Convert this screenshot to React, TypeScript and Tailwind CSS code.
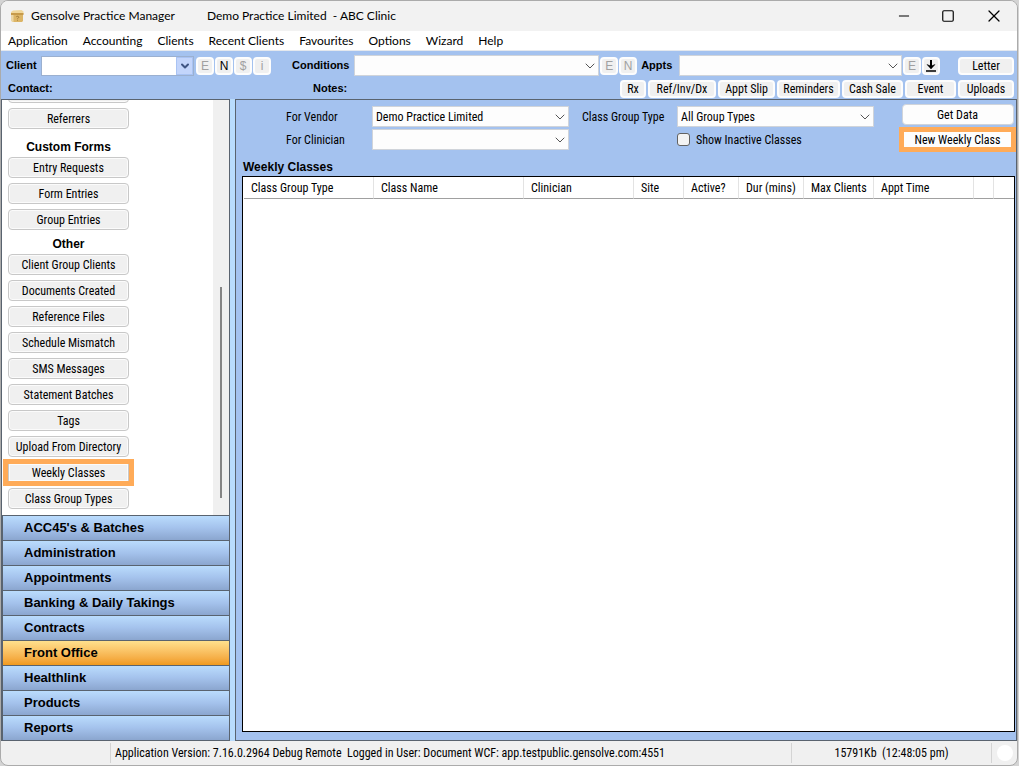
import React from 'react';
import { Minus, Square, X, ChevronDown } from 'lucide-react';

const menuItems = ['Application', 'Accounting', 'Clients', 'Recent Clients', 'Favourites', 'Options', 'Wizard', 'Help'];

const quickActions = [
  { name: 'Rx', width: 'w-[26px]' },
  { name: 'Ref/Inv/Dx', width: 'w-[68px]' },
  { name: 'Appt Slip', width: 'w-[57px]' },
  { name: 'Reminders', width: 'w-[63px]' },
  { name: 'Cash Sale', width: 'w-[61px]' },
  { name: 'Event', width: 'w-[51px]' },
  { name: 'Uploads', width: 'w-[56px]' },
];

const otherLinks = [
  'Client Group Clients',
  'Documents Created',
  'Reference Files',
  'Schedule Mismatch',
  'SMS Messages',
  'Statement Batches',
  'Tags',
  'Upload From Directory',
  'Weekly Classes',
  'Class Group Types',
];

const sections = [
  "ACC45's & Batches",
  'Administration',
  'Appointments',
  'Banking & Daily Takings',
  'Contracts',
  'Front Office',
  'Healthlink',
  'Products',
  'Reports',
];

const columns = [
  { name: 'Class Group Type', width: 'w-[130px]' },
  { name: 'Class Name', width: 'w-[150px]' },
  { name: 'Clinician', width: 'w-[110px]' },
  { name: 'Site', width: 'w-[50px]' },
  { name: 'Active?', width: 'w-[55px]' },
  { name: 'Dur (mins)', width: 'w-[65px]' },
  { name: 'Max Clients', width: 'w-[70px]' },
  { name: 'Appt Time', width: 'w-[100px]' },
  { name: '', width: 'w-[20px]' },
  { name: '', width: '' },
];

type ComboProps = { id: string; options?: string[]; className?: string };

const Combo = ({ id, options = [''], className = '' }: ComboProps) => (
  <div className={`relative h-[21px] ${className}`}>
    <select
      id={id}
      className="block h-full w-full appearance-none border border-[#d0d4da] bg-[#fdfdfd] pl-[3px] pr-5 leading-none outline-none"
    >
      {options.map((option) => (
        <option key={option}>{option}</option>
      ))}
    </select>
    <ChevronDown className="pointer-events-none absolute right-px top-[3px] h-4 w-4 text-[#555]" strokeWidth={1.5} />
  </div>
);

type SmallButtonProps = { children: React.ReactNode; label: string; disabled?: boolean };

const SmallButton = ({ children, label, disabled }: SmallButtonProps) => (
  <button
    aria-label={label}
    disabled={disabled}
    className="flex h-[18px] w-[18px] items-center justify-center rounded border-2 border-[#fdfdfd] bg-[#f0f0f0] text-xs leading-none text-black disabled:text-[#a0a0a0]"
  >
    {children}
  </button>
);

const SideButton = ({ name }: { name: string }) => (
  <button className="h-[21px] w-[121px] shrink-0 rounded border border-[#c8c8c8] bg-[#f0f0f0] leading-none ring-1 ring-inset ring-[#fbfbfb]">
    {name}
  </button>
);

const App = () => {
  return (
    <div className="h-screen bg-[#d4d4d4] pr-px text-xs text-black font-['Roboto_Condensed','Liberation_Sans',sans-serif]">
      <div className="flex h-full flex-col overflow-hidden rounded-lg border border-[#ababab] bg-[#f0f0f0]">
        {/* Title bar */}
        <header className="flex h-[30px] shrink-0 items-center bg-[#f2f2f2] pl-2 font-[Lato,sans-serif]">
          <svg viewBox="0 0 16 16" className="mr-[6px] h-4 w-4">
            <path d="M4 2.5 L12.5 2 L14.5 3.5 V6 H2 V4 Z" fill="#f0d79b" />
            <path d="M2 5 H14.5 V7 H2 Z" fill="#c69a4a" />
            <path d="M2.5 7 H14 V13 L13 14 H3.5 L2.5 13 Z" fill="#dcb566" />
            <path d="M2.5 7 H4.5 V14 H3.5 L2.5 13 Z" fill="#ecd7a6" />
            <path d="M7.3 9 C7.5 8 10 8 9.7 9.5 L8.5 10.7 M8.5 11.8 V12.6" fill="none" stroke="#9c7636" />
          </svg>
          <h1>Gensolve Practice Manager</h1>
          <span className="ml-8 whitespace-pre">Demo Practice Limited  - ABC Clinic</span>
          <div className="ml-auto flex items-center gap-[29px] pr-[13px]">
            <button aria-label="Minimize">
              <Minus className="h-4 w-4" strokeWidth={1.5} />
            </button>
            <button aria-label="Maximize">
              <Square className="h-[14px] w-[14px]" strokeWidth={2} />
            </button>
            <button aria-label="Close">
              <X className="h-5 w-5" strokeWidth={1.5} />
            </button>
          </div>
        </header>

        {/* Menu */}
        <nav className="flex h-[19px] shrink-0 items-center gap-[15px] bg-white pl-[7px] leading-none font-[Lato,sans-serif]">
          {menuItems.map((item) => (
            <button key={item}>{item}</button>
          ))}
        </nav>

        {/* Client toolbar */}
        <div className="shrink-0 border-t border-[#e4e8ee] bg-[#a4c2ef] pt-1">
          <div className="flex h-[21px] items-center pl-[5px] pr-[3px]">
            <label htmlFor="client" className="w-[35px] text-[11px] font-bold font-['Liberation_Sans',Arial,sans-serif]">Client</label>
            <div className="relative h-5 w-[153px]">
              <input id="client" className="block h-full w-full border border-[#9bb0d0] bg-white pl-1 pr-5 outline-none" />
              <button
                aria-label="Choose client"
                className="absolute right-px top-px flex h-[18px] w-[17px] items-center justify-center border border-[#a9c3f3] bg-[#c3d5fb]"
              >
                <ChevronDown className="h-3 w-3 text-[#3f5583]" strokeWidth={4} />
              </button>
            </div>
            <div className="ml-[2px] flex gap-px font-['Liberation_Sans',Arial,sans-serif]">
              <SmallButton label="Edit client" disabled>E</SmallButton>
              <SmallButton label="New client">N</SmallButton>
              <SmallButton label="Client account" disabled>$</SmallButton>
              <SmallButton label="Client info" disabled>i</SmallButton>
            </div>
            <label htmlFor="conditions" className="ml-[21px] w-[62px] text-[11px] font-bold font-['Liberation_Sans',Arial,sans-serif]">Conditions</label>
            <Combo id="conditions" className="flex-[11]" />
            <div className="ml-px flex gap-px font-['Liberation_Sans',Arial,sans-serif]">
              <SmallButton label="Edit condition" disabled>E</SmallButton>
              <SmallButton label="New condition" disabled>N</SmallButton>
            </div>
            <label htmlFor="appts" className="ml-1 w-[38px] text-[11px] font-bold font-['Liberation_Sans',Arial,sans-serif]">Appts</label>
            <Combo id="appts" className="flex-[10]" />
            <div className="ml-px flex gap-px font-['Liberation_Sans',Arial,sans-serif]">
              <SmallButton label="Edit appointment" disabled>E</SmallButton>
              <SmallButton label="Download">
                <svg viewBox="0 0 14 14" className="h-[14px] w-[14px] shrink-0">
                  <path d="M7 1 V8" stroke="#000" strokeWidth="2" />
                  <path d="M3 5.5 L7 7 L11 5.5 L7 10 Z" fill="#000" stroke="#000" strokeWidth="0.5" />
                  <path d="M2 12 H12" stroke="#000" strokeWidth="1.6" />
                </svg>
              </SmallButton>
            </div>
            <button className="ml-[18px] h-[18px] w-[56px] rounded border-2 border-[#fdfdfd] bg-[#f0f0f0] leading-none">Letter</button>
          </div>
          <div className="mt-[2px] flex h-[21px] items-center pl-[7px] pr-[3px]">
            <span className="w-[305px] text-[11px] font-bold font-['Liberation_Sans',Arial,sans-serif]">Contact:</span>
            <span className="text-[11px] font-bold font-['Liberation_Sans',Arial,sans-serif]">Notes:</span>
            <div className="ml-auto flex gap-[2px]">
              {quickActions.map((action) => (
                <button
                  key={action.name}
                  className={`h-[18px] whitespace-nowrap rounded border-2 border-[#fdfdfd] bg-[#f0f0f0] leading-none ${action.width}`}
                >
                  {action.name}
                </button>
              ))}
            </div>
          </div>
        </div>

        <div className="flex min-h-0 flex-1 bg-[#b9dcfd]">
          {/* Sidebar */}
          <aside className="flex w-[229px] shrink-0 flex-col border border-[#59636f] bg-white">
            <div className="flex min-h-0 flex-1 justify-between">
              <div className="flex w-[133px] flex-col items-center justify-end gap-[5px] overflow-hidden pb-[6px]">
                <SideButton name="" />
                <SideButton name="Referrers" />
                <h2 className="mt-1 h-[14px] shrink-0 font-bold leading-[18px] font-['Liberation_Sans',Arial,sans-serif]">Custom Forms</h2>
                <SideButton name="Entry Requests" />
                <SideButton name="Form Entries" />
                <SideButton name="Group Entries" />
                <h2 className="h-[14px] shrink-0 font-bold leading-[18px] font-['Liberation_Sans',Arial,sans-serif]">Other</h2>
                {otherLinks.map((name) =>
                  name === 'Weekly Classes' ? (
                    <div key={name} className="-mx-1 -my-[3px] flex shrink-0 justify-center border-[5px] border-[#ffab58]">
                      <button className="h-[17px] w-[121px] border-x border-[#c8c8c8] bg-[#f0f0f0] leading-none ring-1 ring-inset ring-[#fbfbfb]">
                        {name}
                      </button>
                    </div>
                  ) : (
                    <SideButton key={name} name={name} />
                  )
                )}
              </div>
              <div className="flex w-4 flex-col items-center justify-end bg-[#f0f0f0] pb-[17px]">
                <div className="h-[53%] w-[2px] bg-[#858585]"></div>
              </div>
            </div>
            <nav className="shrink-0 border-l border-t border-[#59636f] text-[13px] font-bold font-['Liberation_Sans',Arial,sans-serif]">
              {sections.map((section) => (
                <button
                  key={section}
                  className={`block h-[25px] w-full border-b border-[#59636f] pb-px pl-[21px] text-left leading-none last:h-6 last:border-b-0 ${
                    section === 'Front Office'
                      ? 'bg-linear-to-b from-[#ffe08c] to-[#f09a1c]'
                      : 'bg-linear-to-b from-[#badcfd] via-[#a4c2ec] to-[#8ba6cf]'
                  }`}
                >
                  {section}
                </button>
              ))}
            </nav>
          </aside>

          {/* Weekly classes */}
          <main className="ml-[5px] flex min-w-0 flex-1 flex-col border border-[#59636f] bg-[#a4c2ef] pb-2 pl-[6px]">
            <div className="flex justify-between pt-1">
              <div className="flex pl-11 pt-[2px]">
                <div className="grid grid-cols-[86px_197px] items-center gap-y-[2px] self-start">
                  <label htmlFor="vendor">For Vendor</label>
                  <Combo id="vendor" options={['Demo Practice Limited']} />
                  <label htmlFor="clinician">For Clinician</label>
                  <Combo id="clinician" />
                </div>
                <div className="ml-[13px] grid grid-cols-[95px_197px] items-center gap-y-[2px] self-start">
                  <label htmlFor="group-type">Class Group Type</label>
                  <Combo id="group-type" options={['All Group Types']} />
                  <label className="col-start-2 flex h-[21px] items-center gap-[6px]">
                    <input type="checkbox" className="h-[13px] w-[13px] appearance-none rounded-[3px] border border-[#626262] bg-[#f3f3f3]" />
                    Show Inactive Classes
                  </label>
                </div>
              </div>
              <div className="flex w-[117px] flex-col items-center gap-[2px]">
                <button className="h-[21px] w-[112px] rounded border border-[#d0d4da] bg-[#fdfdfd] leading-none">Get Data</button>
                <button className="h-[25px] w-full border-[5px] border-[#ffab58] bg-[#fdfdfd] leading-none">New Weekly Class</button>
              </div>
            </div>
            <h2 className="mt-[7px] pl-px font-bold leading-[17px] font-['Liberation_Sans',Arial,sans-serif]">Weekly Classes</h2>
            <div className="mr-px min-h-0 flex-1 overflow-hidden border border-black bg-white pl-px">
              <table className="w-full table-fixed border-separate border-spacing-0">
                <thead>
                  <tr>
                    {columns.map((column, index) => (
                      <th
                        key={index}
                        className={`h-[22px] whitespace-nowrap border-b border-r border-b-[#a0a0a0] border-r-[#e3e3e3] p-0 pl-[7px] text-left font-normal last:border-r-0 ${column.width}`}
                      >
                        {column.name}
                      </th>
                    ))}
                  </tr>
                </thead>
                <tbody></tbody>
              </table>
            </div>
          </main>
        </div>

        {/* Status bar */}
        <footer className="flex h-6 shrink-0 items-center">
          <div className="h-5 w-[110px] border-r border-[#d4d4d4]"></div>
          <div className="flex h-5 flex-1 items-center whitespace-pre pl-1">
            Application Version: 7.16.0.2964 Debug Remote  Logged in User: Document WCF: app.testpublic.gensolve.com:4551
          </div>
          <div className="flex h-5 w-[201px] items-center justify-center whitespace-pre border-x border-[#d4d4d4]">
            15791Kb  (12:48:05 pm)
          </div>
          <div className="flex w-[25px] justify-center">
            <div className="h-4 w-4 rounded-full bg-white"></div>
          </div>
        </footer>
      </div>
    </div>
  );
};

export default App;
